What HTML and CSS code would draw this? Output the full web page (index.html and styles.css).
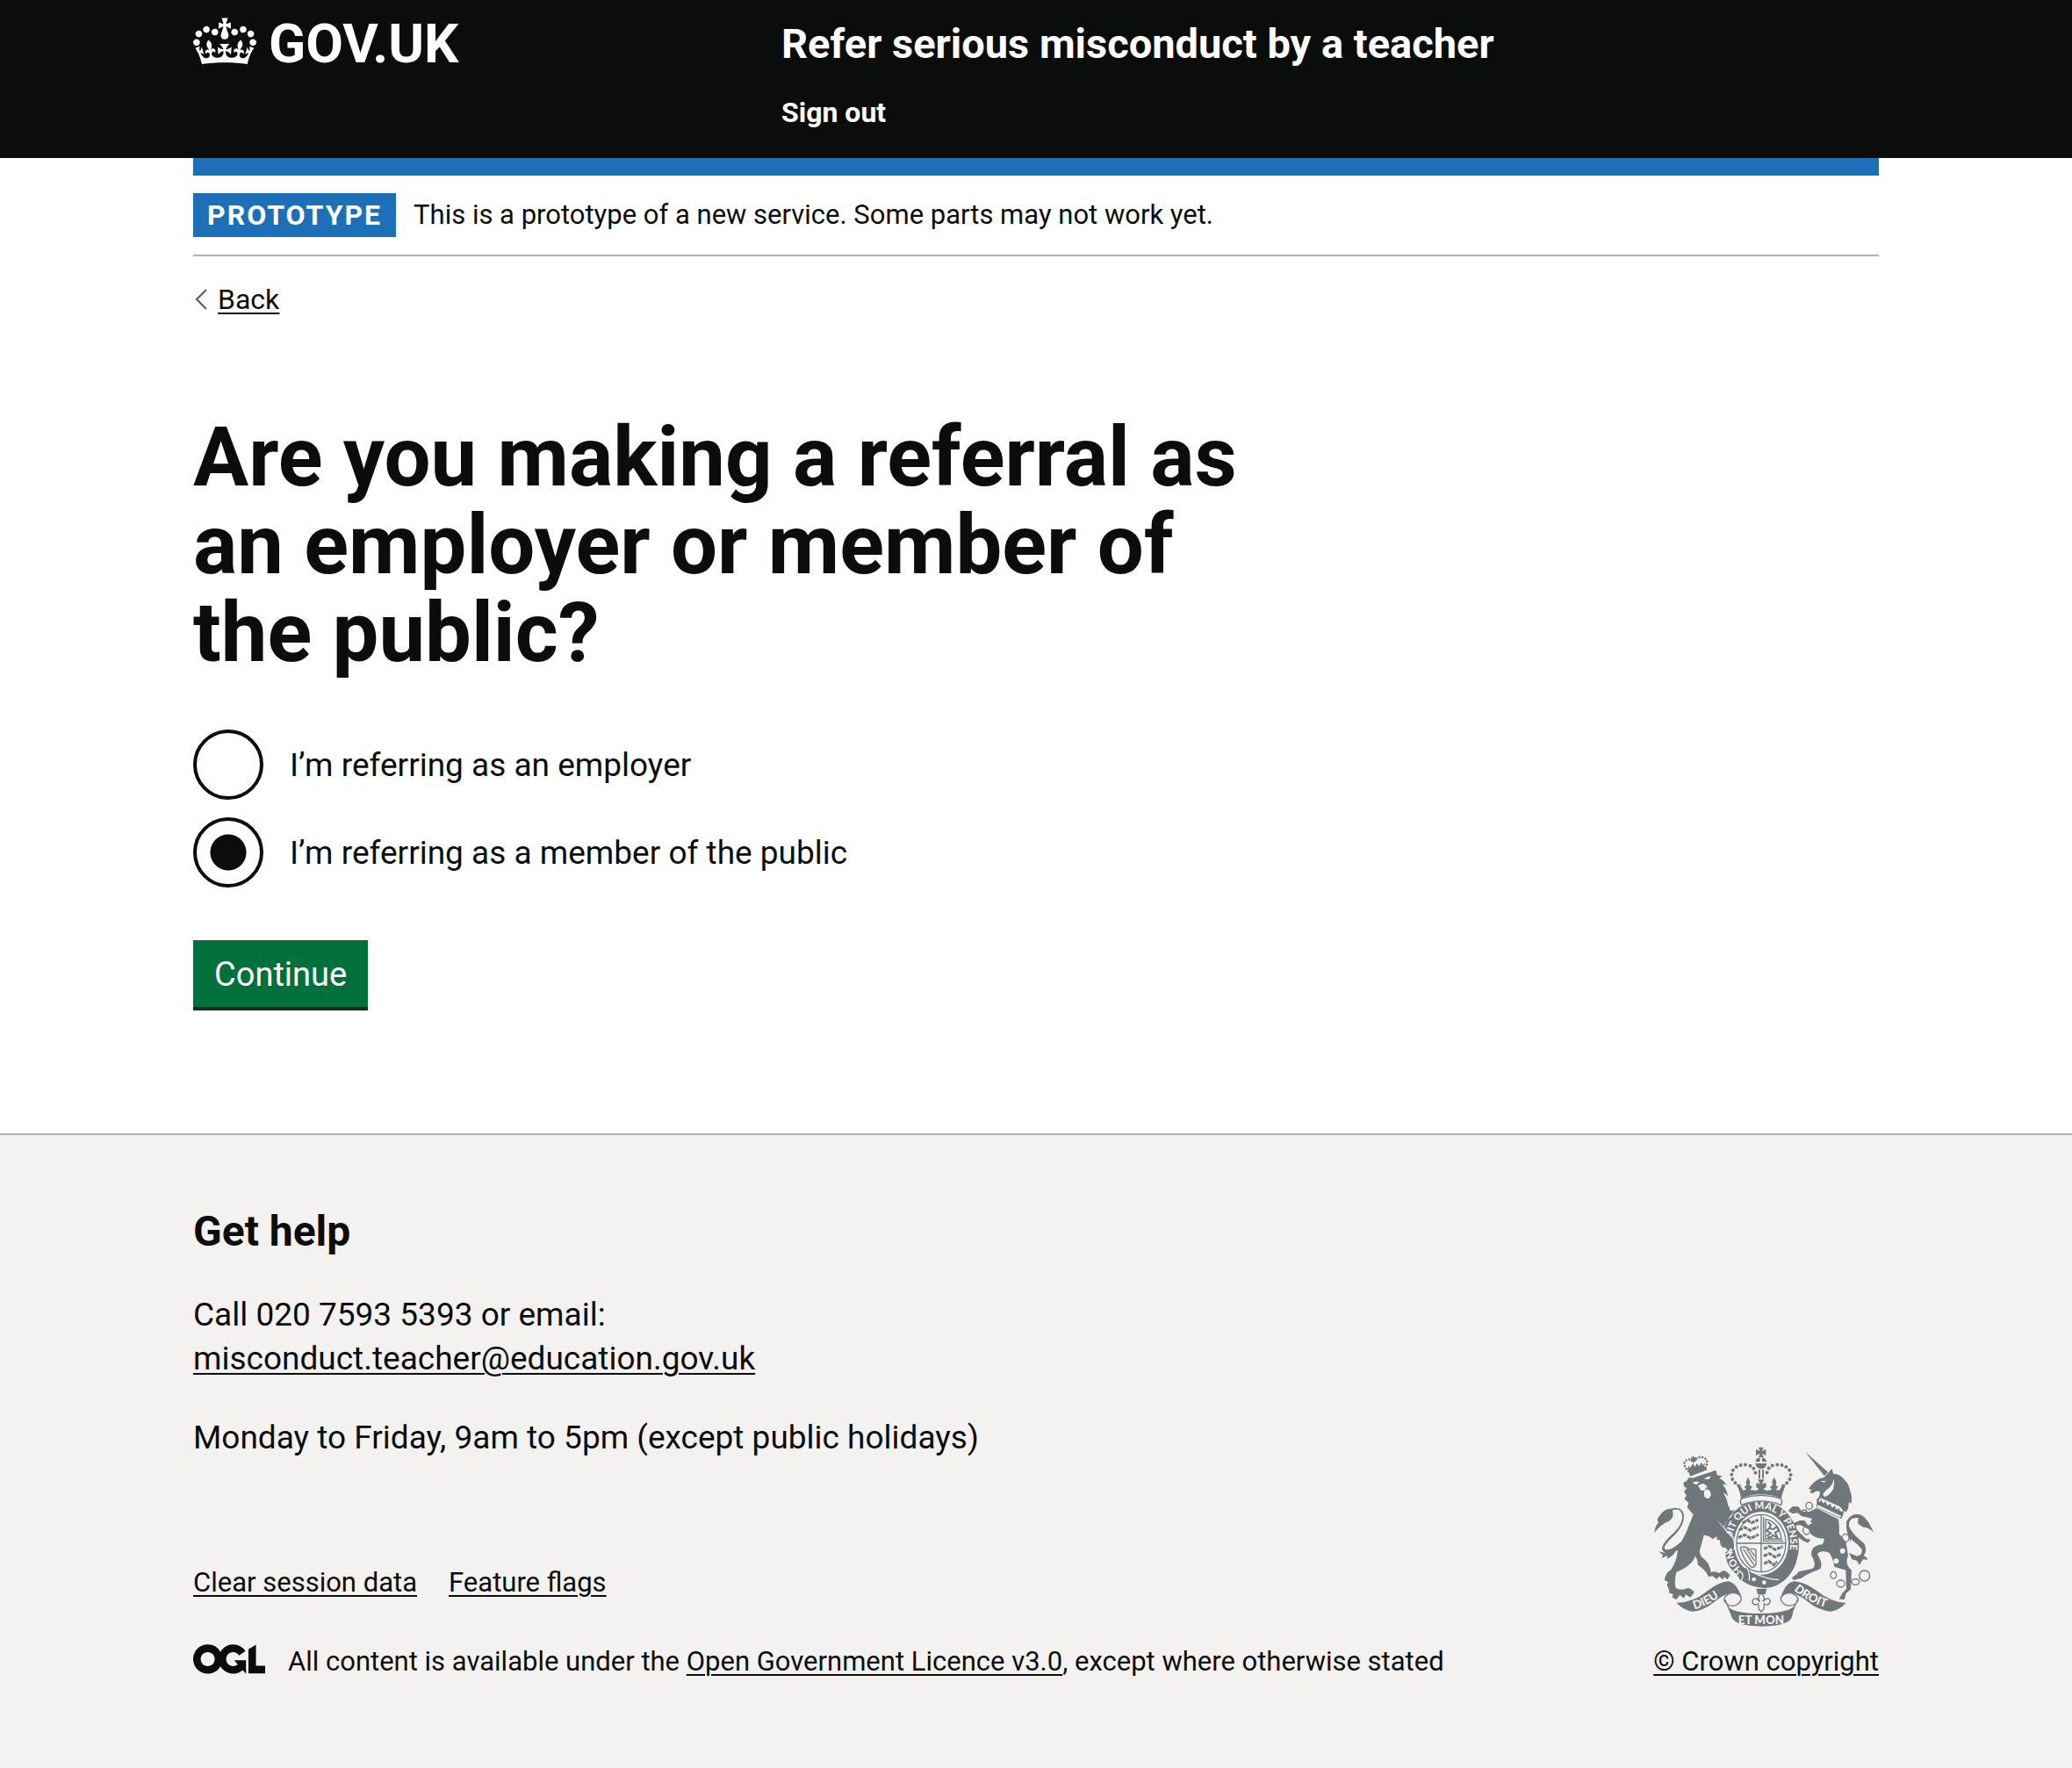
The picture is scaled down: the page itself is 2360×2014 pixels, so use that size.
FILE: index.html
```html
<!DOCTYPE html>
<html lang="en">
<head>
<meta charset="utf-8">
<meta name="viewport" content="width=device-width, initial-scale=1">
<title>Are you making a referral as an employer or member of the public?</title>
<link rel="stylesheet" href="styles.css">
</head>
<body>
<header class="header">
  <div class="container header-grid">
    <a class="logo" href="#">
      <svg class="crown" viewBox="0 0 132 97" aria-hidden="true"><path fill="currentColor" d="M25 30.2c3.5 1.5 7.7-.2 9.1-3.7 1.5-3.6-.2-7.8-3.9-9.2-3.6-1.4-7.6.3-9.1 3.9-1.4 3.5.3 7.5 3.9 9zM9 39.5c3.6 1.5 7.8-.2 9.2-3.7 1.5-3.6-.2-7.8-3.9-9.1-3.6-1.5-7.6.2-9.1 3.8-1.4 3.5.3 7.5 3.8 9zM4.4 57.2c3.5 1.5 7.7-.2 9.1-3.8 1.5-3.6-.2-7.7-3.9-9.1-3.5-1.5-7.6.3-9.1 3.8-1.4 3.5.3 7.6 3.9 9.1zm38.3-21.4c3.5 1.5 7.7-.2 9.1-3.8 1.5-3.6-.2-7.7-3.9-9.1-3.6-1.5-7.6.3-9.1 3.8-1.3 3.6.4 7.7 3.9 9.1zm64.4-5.6c-3.6 1.5-7.8-.2-9.1-3.7-1.5-3.6.2-7.8 3.8-9.2 3.6-1.4 7.7.3 9.2 3.9 1.3 3.5-.4 7.5-3.9 9zm15.9 9.3c-3.6 1.5-7.7-.2-9.1-3.7-1.5-3.6.2-7.8 3.7-9.1 3.6-1.5 7.7.2 9.2 3.8 1.5 3.5-.3 7.5-3.8 9zm4.7 17.7c-3.6 1.5-7.8-.2-9.2-3.8-1.5-3.6.2-7.7 3.9-9.1 3.6-1.5 7.7.3 9.2 3.8 1.3 3.5-.4 7.6-3.9 9.1zM89.3 35.8c-3.6 1.5-7.8-.2-9.2-3.8-1.4-3.6.2-7.7 3.9-9.1 3.6-1.5 7.7.3 9.2 3.8 1.4 3.6-.3 7.7-3.9 9.1zM69.7 17.7l8.9 4.7V9.3l-8.9 2.8c-.2-.3-.5-.6-.9-.9L72.4 0H59.6l3.5 11.2c-.3.3-.6.5-.9.9l-8.8-2.8v13.1l8.8-4.7c.3.3.6.7.9.9l-5 15.4v.1c-.2.8-.4 1.6-.4 2.4 0 4.1 3.1 7.5 7 8.1h.2c.3 0 .7.1 1 .1.4 0 .7 0 1-.1h.2c4-.6 7.1-4.1 7.1-8.1 0-.8-.1-1.7-.4-2.4V34l-5.1-15.4c.4-.2.7-.6 1-.9zM66 92.8c16.9 0 32.8 1.1 47.1 3.2 4-16.9 8.9-26.7 14-33.5l-9.6-3.4c1 4.9 1.1 7.2 0 10.2-1.5-1.4-3-4.3-4.2-8.7L108.6 76c2.8-2 5-3.2 7.5-3.3-4.4 9.4-10 11.9-13.6 11.2-4.3-.8-6.3-4.6-5.6-7.9 1-4.7 5.7-5.9 8-.5 4.3-8.7-3-11.4-7.6-8.8 7.1-7.2 7.9-13.5 2.1-21.1-8 6.1-8.1 12.3-4.5 20.8-4.7-5.4-12.1-2.5-9.5 6.2 3.4-5.2 7.9-2 7.2 3.1-.6 4.3-6.4 7.8-13.5 7.2-10.3-.9-10.9-8-11.2-13.8 2.5-.5 7.1 1.8 11 7.3L80.2 60c-4.1 4.4-8 5.3-12.3 5.4 1.4-4.4 8-11.6 8-11.6H55.5s6.4 7.2 7.9 11.6c-4.2-.1-8-1-12.3-5.4l1.4 16.4c3.9-5.5 8.5-7.7 10.9-7.3-.3 5.8-.9 12.8-11.1 13.8-7.2.6-12.9-2.9-13.5-7.2-.7-5 3.8-8.3 7.1-3.1 2.7-8.7-4.6-11.6-9.4-6.2 3.7-8.5 3.6-14.7-4.6-20.8-5.8 7.6-5 13.9 2.2 21.1-4.7-2.6-11.9.1-7.7 8.8 2.3-5.5 7.1-4.2 8.1.5.7 3.3-1.3 7.1-5.7 7.9-3.5.7-9-1.8-13.5-11.2 2.5.1 4.7 1.3 7.5 3.3l-4.7-15.4c-1.2 4.4-2.7 7.2-4.3 8.7-1.1-3-.9-5.3 0-10.2l-9.5 3.4c5 6.9 9.9 16.7 14 33.5 14.8-2.1 30.8-3.2 47.7-3.2z"/></svg>
      <span>GOV.UK</span>
    </a>
    <div class="header-content">
      <a class="service-name" href="#">Refer serious misconduct by a teacher</a>
      <nav aria-label="Menu"><a class="nav-link" href="#">Sign out</a></nav>
    </div>
  </div>
</header>

<div class="container">
  <div class="header-bar"></div>
  <div class="phase-banner">
    <strong class="tag">PROTOTYPE</strong>
    <span>This is a prototype of a new service. Some parts may not work yet.</span>
  </div>
  <a class="back-link" href="#">
    <svg class="chevron" viewBox="0 0 14 24" aria-hidden="true"><path d="M13 1L2 12l11 11" fill="none" stroke="currentColor" stroke-width="2"/></svg>
    <span>Back</span>
  </a>

  <main class="main">
    <form class="two-thirds">
      <fieldset class="fieldset">
        <legend class="legend"><h1 class="heading-xl">Are you making a referral as an employer or member of the public?</h1></legend>
        <div class="radios">
          <div class="radio-item">
            <input class="radio" type="radio" name="referrer" id="employer" value="employer">
            <label for="employer">I’m referring as an employer</label>
          </div>
          <div class="radio-item">
            <input class="radio" type="radio" name="referrer" id="public" value="public" checked>
            <label for="public">I’m referring as a member of the public</label>
          </div>
        </div>
      </fieldset>
      <button class="button" type="button">Continue</button>
    </form>
  </main>
</div>

<footer class="footer">
  <div class="container footer-grid">
    <div class="footer-main">
      <h2 class="heading-m">Get help</h2>
      <p class="help-text">Call 020 7593 5393 or email:<br><a href="#">misconduct.teacher@education.gov.uk</a></p>
      <p class="help-text">Monday to Friday, 9am to 5pm (except public holidays)</p>
      <ul class="footer-links">
        <li><a href="#">Clear session data</a></li>
        <li><a href="#">Feature flags</a></li>
      </ul>
      <div class="licence">
        <svg class="ogl" viewBox="0 0 483 196" aria-hidden="true"><path fill="currentColor" d="M421.5 142.8V.1l-50.7 32.3v161.1h112.4v-50.7zm-122.3-9.6A47.12 47.12 0 0 1 221 97.8c0-26 21.1-47.1 47.1-47.1 16.7 0 31.4 8.7 39.7 21.8l42.7-27.2A97.63 97.63 0 0 0 268.1 0c-36.5 0-68.3 20.1-85.1 49.7A98 98 0 0 0 97.8 0C43.9 0 0 43.9 0 97.8s43.9 97.8 97.8 97.8c36.5 0 68.3-20.1 85.1-49.7a97.76 97.76 0 0 0 149.6 25.4l19.4 22.2h3v-87.8h-80l24.3 27.5zM97.8 145c-26 0-47.1-21.1-47.1-47.1s21.1-47.1 47.1-47.1 47.1 21.1 47.1 47.1S123.8 145 97.8 145"/></svg>
        <span>All content is available under the <a href="#">Open Government Licence v3.0</a>, except where otherwise stated</span>
      </div>
    </div>
    <a class="copyright" href="#">
      <svg class="crest" viewBox="72 58 750 615" aria-hidden="true">
        <defs>
          <path id="garter-line" d="M376 482A100 118 0 1 1 496 484"/>
          <path id="dieu-line" d="M210 614Q265 600 322 548"/>
          <path id="droit-line" d="M549 548Q610 600 690 614"/>
        </defs>
        <!-- lion -->
        <g class="ink">
          <path d="M172 181L184 174Q187 165 196 160Q240 156 283 138L288 156Q298 154 305 161Q297 163 295 167Q310 172 320 190Q311 184 306 188Q318 198 325 228Q315 216 309 217Q322 236 324 257Q330 266 333 277Q340 278 347 272Q330 292 319 315L310 330L342 366Q351 392 345 416L334 405L325 416L318 403L303 402L310 391L298 388L303 375L286 377L287 364L272 374Q264 362 242 360Q236 385 228 412Q226 430 244 443Q262 458 266 487Q282 482 294 490Q308 478 318 484L332 497L322 512L311 502L308 512L294 501L286 511L272 500L258 503Q250 480 222 462Q221 441 212 432Q206 462 148 487Q140 520 146 541Q166 551 188 541Q204 545 209 556L196 573L180 563L174 576L160 565L148 580L135 574L136 561L124 558L122 543L116 532L120 520L108 515Q108 492 130 478Q154 440 152 410Q166 382 182 350L206 290L185 265L190 250L175 236L183 225L174 212L183 200L174 193Z"/>
          <path d="M168 395Q130 440 102 414Q88 398 142 350Q172 320 168 290Q160 265 134 276Q144 298 122 313Q98 321 73 352Q74 330 88 316Q76 312 94 290Q108 269 128 270Q168 260 174 291Q176 326 142 360Q104 394 108 407Q120 416 148 396L166 381Z"/>
          <path d="M88 416L107 420L150 408L138 426L118 442L116 430L98 440L102 428Z"/>
          <path d="M190 144L243 126L254 137L196 159Z"/>
          <path d="M187 136L190 123L195 131L205 115L211 128L218 115L226 124L234 112L240 122L246 112L243 129L194 147Z"/>
          <path d="M198 91L202 96L205 88L210 95L216 94L213 101L218 107L209 105L206 115L202 105L195 108L199 100Z"/>
        </g>
        <path class="beads" d="M190 142Q166 118 181 105Q194 96 207 111Q222 86 243 96Q262 107 245 134"/>
        <g class="paper">
          <path d="M203 181Q214 174 228 179L216 188ZM243 169Q255 157 266 160L260 169ZM222 190L240 183L254 194L243 208L232 207Z"/>
          <path d="M243 210Q252 198 262 209Q272 222 259 235Q244 236 243 224Z"/>
          <path d="M196 160Q240 150 258 133L263 138Q238 158 194 166Z"/>
        </g>
        <!-- unicorn -->
        <g class="ink">
          <path d="M588 75L666 145L654 158Z"/>
          <path d="M600 202Q618 170 654 162L680 133L684 150Q708 151 720 168Q738 184 742 210Q752 235 744 254L738 246L735 270L728 281L720 278L708 300L635 265L629 240Q640 225 638 210L625 210L612 218L603 212L612 206Z"/>
          <path d="M628 268L702 306Q706 334 704 355L728 385L735 430Q722 460 747 480L744 545L728 560L722 580L704 579L715 558L729 544L727 480L688 468Q684 438 670 420Q640 410 630 425Q650 456 640 476Q600 490 575 507L548 514L543 505L560 493L566 485L612 475Q630 465 610 430Q605 395 648 392L654 372Q608 372 600 340L570 325L556 327L560 342L572 354L591 372L607 375L598 387L580 379L560 363L546 330L550 318L570 310L590 310L600 325L612 304L590 298L577 296L562 284L545 287L530 277L545 262L566 263L576 279L600 281Z"/>
          <path d="M744 388L741 374Q725 345 730 312Q742 290 764 289Q786 286 806 318L822 350Q804 332 786 333L768 320L770 301Q740 298 738 322Q736 346 790 389Q802 414 788 430Q801 438 802 444L786 443L774 462L764 447L748 443L738 421L762 431Q784 433 782 410Q776 398 744 374Z"/>
          <path d="M629 233L641 243L648 236L655 251L666 242L670 260L682 250L688 271L698 261L702 279L721 282L712 305L627 265Z"/>
        </g>
        <g class="paper">
          <path d="M640 176L658 174L653 180Z"/>
          <path d="M661 205Q681 194 686 168Q694 204 664 226Q650 233 649 219ZM631 257L711 294L708 300L629 264Z"/>
          <path d="M640 233L706 262L718 276L714 280L634 244Z"/>
          <circle cx="716" cy="414" r="9"/><circle cx="694" cy="449" r="9"/><path d="M585 308L613 318L598 327Z"/>
        </g>
        <path class="ink" d="M638 255L642 238L650 252L658 245L664 260L674 252L680 268L690 259L694 275L706 268L702 288Z"/>
        <g class="line">
          <ellipse cx="602" cy="260" rx="11" ry="12"/><ellipse cx="585" cy="284" rx="9" ry="10"/>
          <ellipse cx="593" cy="344" rx="12" ry="14"/><ellipse cx="726" cy="370" rx="12" ry="13"/>
          <ellipse cx="685" cy="497" rx="10" ry="12"/><ellipse cx="710" cy="526" rx="14" ry="12"/>
          <ellipse cx="760" cy="520" rx="13" ry="10"/><circle cx="791" cy="499" r="18"/>
        </g>
        <!-- royal crown -->
        <g class="ink">
          <path d="M429 60H446L441 73L454 66V88L441 81L446 94H429L434 81L420 88V66L434 73Z"/>
          <path d="M418 109Q421 96 434 95V109ZM441 95Q454 97 457 109H441ZM418 115H457Q454 132 438 134Q421 132 418 115Z"/>
          <path d="M429 137H435V167H429ZM441 137H447V167H441Z"/>
          <path d="M353 184L369 196L376 207L388 205L380 195L388 189L386 178L393 162L400 178L398 190L408 194L401 206L420 208L430 202L421 196V181L434 186L427 170H448L441 186L455 181V196L445 202L456 208L474 206L468 194L477 190L475 178L482 162L490 178L488 190L496 195L488 205L500 207L507 196L522 184Q512 214 506 234Q438 208 369 234Q366 211 353 184Z"/>
        </g>
        <path class="beads large" d="M362 192Q326 168 342 138Q358 116 390 120Q416 124 419 151M513 192Q550 168 534 138Q518 116 486 120Q460 124 457 151"/>
        <path class="line" d="M370 235Q438 213 506 235Q512 246 505 257Q438 230 371 257Q364 247 370 235Z"/>
        <!-- garter and shield -->
        <path class="ink" d="M332 303L348 276L325 291ZM312 330Q350 244 439 245C510 245 567 312 567 392C567 475 520 538 448 540Q383 538 352 492Q318 468 315 418L346 408Q338 370 312 330Z"/>
        <ellipse class="paper" cx="438" cy="388" rx="93" ry="108"/>
        <text class="motto small"><textPath href="#garter-line">HONI SOIT QUI MAL Y PENSE</textPath></text>
        <path class="paper" d="M284 305L344 368L350 408L324 421L334 366Z"/>
        <path class="ink" d="M284 320L340 370Q349 392 343 416L334 404L326 416L316 402L300 396Z"/>
        <g class="line">
          <ellipse cx="438" cy="388" rx="84" ry="98"/>
          <path d="M438 290V486M354 388H522M446 299V380H514M453 306Q500 316 507 373H453Z"/>
          <path d="M367 404Q382 394 398 410Q412 404 420 411V461Q412 474 403 468Q377 444 367 404ZM377 408L414 463M389 408L415 448M402 413L416 432"/>
          <path d="M460 315L471 325L466 337L480 340L491 331L498 345L486 352L493 368L479 361L466 371L460 361L471 354L456 345L465 337" stroke-width="6"/>
        </g>
        <g class="beasts">
          <path d="M374 319L391 309L405 318L428 308M362 343L382 334L400 344L428 332M360 369L382 359L402 371L429 358"/>
          <path d="M447 407L466 398L486 410L512 399M447 432L466 423L486 435L507 424M448 458L464 449L480 462L493 451"/>
        </g>
        <path class="ink" d="M362 485L376 471L397 476L404 489L442 499Q480 516 514 514Q487 541 448 540Q405 535 382 519L363 512Z"/>
        <path class="line light" d="M364 484Q383 491 370 515M390 474Q400 487 397 516M403 484Q450 511 499 513"/>
        <circle class="paper" cx="413" cy="511" r="7"/><circle class="paper" cx="448" cy="522" r="7"/>
        <!-- ribbon -->
        <path class="ink" d="M148 592Q210 588 248 555Q295 520 324 518Q354 522 372 575Q360 554 334 558Q310 562 278 588Q242 618 204 621Q175 618 148 592ZM728 592Q673 588 632 553Q585 520 550 518Q520 522 504 575Q516 554 542 558Q570 564 600 590Q635 618 675 621Q703 618 728 592ZM326 606Q350 628 440 628Q525 626 550 604L544 637Q535 671 440 672Q347 670 337 640Z"/>
        <path class="line" d="M336 558Q306 568 313 586Q326 608 352 600Q370 590 370 574Q363 556 336 558ZM540 558Q568 568 563 586Q550 606 524 600Q504 591 505 574Q514 556 540 558ZM314 580L333 624M563 580L543 624"/>
        <text class="motto"><textPath href="#dieu-line">DIEU</textPath></text>
        <text class="motto"><textPath href="#droit-line">DROIT</textPath></text>
        <text class="motto" x="438" y="663" text-anchor="middle">ET MON</text>
        <!-- lily pendant -->
        <path class="ink" d="M421 543H457L452 562H426Z"/>
        <path class="line" d="M438 556L449 574L444 588Q455 574 463 577Q476 588 460 599L448 595L447 613L438 622L430 613L428 595L416 599Q401 588 414 577Q423 574 433 588L428 574Z"/>
      </svg>
      <span>© Crown copyright</span>
    </a>
  </div>
</footer>
</body>
</html>
```
FILE: styles.css
```css
* { box-sizing: border-box; }

body {
  display: flex;
  flex-direction: column;
  min-height: 100vh;
  margin: 0;
  background: #fff;
  color: #0b0c0c;
  font-family: Roboto, "Liberation Sans", sans-serif;
  font-size: 31px;
  line-height: 40px;
}

a {
  color: inherit;
  text-decoration-thickness: 2px;
  text-underline-offset: 4px;
}

.container {
  width: calc(100% - 60px);
  max-width: 1920px;
  margin: 0 auto;
}

/* Header */
.header { background: #0b0c0c; color: #fff; }

.header-grid {
  display: grid;
  grid-template-columns: 67fr 125fr;
  min-height: 180px;
  padding-top: 20px;
}

.logo {
  display: flex;
  align-items: flex-start;
  gap: 14px;
  font-size: 62px;
  font-weight: 700;
  line-height: 60px;
  text-decoration: none;
}

.crown { width: 72px; height: 54px; }

.header-content {
  display: flex;
  flex-direction: column;
  gap: 28px;
}

.service-name {
  font-size: 47px;
  font-weight: 700;
  line-height: 60px;
  text-decoration: none;
}

.nav-link {
  font-size: 32px;
  font-weight: 700;
  text-decoration: none;
}

.header-bar { height: 20px; background: #1d70b8; }

/* Phase banner */
.phase-banner {
  display: flex;
  align-items: center;
  gap: 20px;
  padding: 20px 0;
  border-bottom: 2px solid #b1b4b6;
}

.tag {
  padding: 5px 16px;
  background: #1d70b8;
  color: #fff;
  font-size: 32px;
  letter-spacing: 2px;
}

.back-link {
  display: inline-flex;
  align-items: center;
  gap: 12px;
  margin-top: 29px;
  padding-left: 2px;
  font-size: 32px;
}

.chevron { width: 14px; height: 24px; color: #505a5f; }

/* Question */
.main { padding: 108px 0 140px; }

.two-thirds { max-width: 1240px; }

.fieldset { margin: 0; padding: 0; border: 0; }

.legend { padding: 0; }

.heading-xl {
  margin: 0 0 60px;
  font-size: 94px;
  line-height: 100px;
}

.radios {
  display: flex;
  flex-direction: column;
  gap: 20px;
  margin-bottom: 60px;
}

.radio-item {
  display: flex;
  align-items: center;
  gap: 30px;
  font-size: 37px;
  line-height: 50px;
}

.radio-item label { padding-top: 2px; }

.radio {
  appearance: none;
  width: 80px;
  height: 80px;
  margin: 0;
  border: 4px solid #0b0c0c;
  border-radius: 50%;
  background: #fff;
}

.radio:checked { background: radial-gradient(circle, #0b0c0c 20px, #fff 21px); }

.button {
  padding: 15px 24px 13px;
  border: 0;
  border-bottom: 4px solid #002d18;
  background: #00703c;
  color: #fff;
  font: inherit;
  font-size: 38px;
  line-height: 48px;
}

/* Footer */
.footer {
  flex: 1;
  padding: 80px 0 90px;
  border-top: 2px solid #b1b4b6;
  background: #f3f2f1;
}

.footer-grid {
  display: flex;
  align-items: flex-end;
  justify-content: space-between;
  gap: 40px;
}

.heading-m {
  margin: 0 0 40px;
  font-size: 48px;
  line-height: 60px;
}

.help-text {
  margin: 0 0 40px;
  font-size: 37px;
  line-height: 50px;
}

.footer-links {
  display: flex;
  gap: 36px;
  margin: 120px 0 50px;
  padding: 0;
  list-style: none;
}

.licence { display: flex; align-items: flex-start; gap: 26px; }

.ogl { width: 82px; height: 34px; }

.copyright {
  display: flex;
  flex-direction: column;
  align-items: flex-end;
  gap: 20px;
}

.crest { width: 250px; height: 205px; margin-right: 6px; }

.ink { fill: #6f777b; }
.paper { fill: #f3f2f1; }
.line { fill: none; stroke: #6f777b; stroke-width: 4; }
.line.light { stroke: #f3f2f1; }
.beads { fill: none; stroke: #6f777b; stroke-width: 8; stroke-linecap: round; stroke-dasharray: 0 11; }
.beads.large { stroke-width: 12; stroke-dasharray: 0 16; }
.beasts { fill: none; stroke: #6f777b; stroke-width: 9; stroke-dasharray: 14 3; }

.motto {
  fill: #f3f2f1;
  font-family: Lato, sans-serif;
  font-size: 40px;
  font-weight: 900;
}

.motto.small { font-size: 34px; }
```
